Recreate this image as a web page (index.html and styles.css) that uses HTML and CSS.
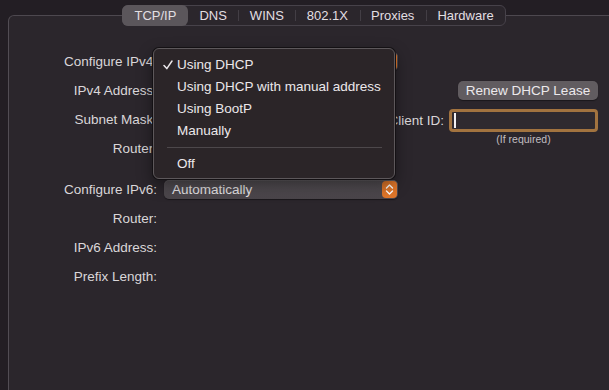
FILE: index.html
```html
<!DOCTYPE html>
<html>
<head>
<meta charset="utf-8">
<link rel="stylesheet" href="styles.css">
</head>
<body>
<div class="box">
  <div class="tabs">
    <div class="tab selected">TCP/IP</div>
    <div class="tab">DNS</div>
    <div class="tab sep">WINS</div>
    <div class="tab sep">802.1X</div>
    <div class="tab sep">Proxies</div>
    <div class="tab sep">Hardware</div>
  </div>

  <div class="section ipv4">
    <div class="lbl">Configure IPv4:</div>
    <div class="popup-wrap">
      <div class="popup">
        <span class="popup-text under">Using DHCP</span>
        <span class="stepper"><svg width="9" height="13" viewBox="0 0 9 13"><path d="M1.5 5 L4.5 2 L7.5 5 M1.5 8 L4.5 11 L7.5 8" fill="none" stroke="#fff" stroke-width="1.4" stroke-linecap="round" stroke-linejoin="round"/></svg></span>
      </div>
      <div class="menu">
        <div class="item checked"><svg class="check" width="10" height="10" viewBox="0 0 10 10"><path d="M1 5.5 L3.8 8.6 L9 1" fill="none" stroke="#ebe7ea" stroke-width="1.5" stroke-linecap="round" stroke-linejoin="round"/></svg>Using DHCP</div>
        <div class="item">Using DHCP with manual address</div>
        <div class="item">Using BootP</div>
        <div class="item">Manually</div>
        <div class="menu-sep"></div>
        <div class="item">Off</div>
      </div>
    </div>
    <div></div>

    <div class="lbl">IPv4 Address:</div>
    <div></div>
    <div class="right"><button class="renew">Renew DHCP Lease</button></div>

    <div class="lbl">Subnet Mask:</div>
    <div class="client">
      <span class="client-lbl">Client ID:</span>
      <div class="field-group">
        <div class="field"><span class="caret"></span></div>
        <div class="hint">(If required)</div>
      </div>
    </div>

    <div class="lbl">Router:</div>
    <div></div>
    <div></div>
  </div>

  <div class="section ipv6">
    <div class="lbl">Configure IPv6:</div>
    <div class="popup">
      <span class="popup-text">Automatically</span>
      <span class="stepper"><svg width="9" height="13" viewBox="0 0 9 13"><path d="M1.5 5 L4.5 2 L7.5 5 M1.5 8 L4.5 11 L7.5 8" fill="none" stroke="#fff" stroke-width="1.4" stroke-linecap="round" stroke-linejoin="round"/></svg></span>
    </div>
    <div></div>

    <div class="lbl">Router:</div>
    <div></div>
    <div></div>

    <div class="lbl">IPv6 Address:</div>
    <div></div>
    <div></div>

    <div class="lbl">Prefix Length:</div>
    <div></div>
    <div></div>
  </div>
</div>
</body>
</html>
```

FILE: styles.css
```css
html, body {
  margin: 0;
  padding: 0;
  height: 100%;
  overflow: hidden;
}
body {
  background: #231e24;
  font-family: "Liberation Sans", Arial, sans-serif;
  font-size: 13.5px;
  color: #dcd8db;
}
.box {
  margin: 15px 0 0 8px;
  height: 375px;
  box-sizing: border-box;
  border-left: 1px solid #524d54;
  border-top: 1px solid #4d484f;
  border-top-left-radius: 6px;
  background: #2b262c;
}
.tabs {
  display: flex;
  width: fit-content;
  margin: -11px 0 0 113px;
  height: 19px;
  border: 1px solid #47424a;
  border-radius: 6px;
  background: #2b262c;
  align-items: stretch;
  font-size: 13px;
}
.tab {
  position: relative;
  padding: 0 11.5px;
  line-height: 19px;
  color: #e2dfe2;
}
.tab.selected {
  background: #5b565b;
  border-radius: 6px;
  margin: -1px 0 -1px -1px;
  line-height: 21px;
  padding: 0 11.5px 0 12.5px;
}
.tab.sep::before {
  content: "";
  position: absolute;
  left: 0;
  top: 4px;
  width: 1px;
  height: 11px;
  background: #433e45;
}
.section {
  display: grid;
  grid-template-columns: 148px 234px 1fr;
  grid-auto-rows: 29px;
  column-gap: 7px;
  align-items: center;
}
.ipv4 {
  margin-top: 21px;
}
.ipv6 {
  margin-top: 12px;
}
.lbl {
  text-align: right;
  color: #dad6d9;
}
.popup-wrap {
  position: relative;
  height: 19px;
}
.popup {
  height: 19px;
  box-sizing: border-box;
  border-radius: 5px;
  background: linear-gradient(#555055, #4a454a);
  box-shadow: inset 0 1px 0 rgba(255,255,255,0.08), 0 0.5px 1px rgba(0,0,0,0.4);
  display: flex;
  align-items: center;
  justify-content: space-between;
  padding: 0 1px 0 8px;
  color: #e8e5e8;
}
.popup-text.under {
  visibility: hidden;
}
.stepper {
  width: 15px;
  height: 17px;
  border-radius: 4px;
  background: #e1772a;
  display: flex;
  align-items: center;
  justify-content: center;
}
.menu {
  position: absolute;
  left: -11px;
  top: -4px;
  width: 242px;
  height: 131px;
  box-sizing: border-box;
  padding: 5px 0;
  background: #2b2528;
  border: 1px solid #5d585b;
  border-radius: 6px;
  box-shadow: 0 0 0 1px #141114, 0 6px 16px rgba(0,0,0,0.45);
  z-index: 5;
  color: #ece8eb;
}
.item {
  position: relative;
  height: 22px;
  line-height: 22px;
  padding-left: 23px;
  white-space: nowrap;
}
.check {
  position: absolute;
  left: 9px;
  top: 6px;
}
.menu-sep {
  height: 1px;
  margin: 5px 12px 5px 13px;
  background: #4d484b;
}
.right {
  display: flex;
  justify-content: flex-end;
  padding-right: 11px;
}
.renew {
  font: inherit;
  width: 140px;
  height: 19px;
  padding: 0;
  border: none;
  border-radius: 5px;
  background: #615c60;
  color: #ece9ec;
  box-shadow: 0 0.5px 1px rgba(0,0,0,0.4);
}
.client {
  grid-column: 2 / 4;
  display: flex;
  justify-content: flex-end;
  align-items: flex-start;
  align-self: start;
  padding: 4px 11px 0 0;
}
.client-lbl {
  line-height: 23px;
  margin-right: 5px;
  color: #dad6d9;
}
.field-group {
  display: flex;
  flex-direction: column;
  align-items: center;
  width: 149px;
}
.field {
  width: 149px;
  height: 23px;
  box-sizing: border-box;
  border: 3px solid #a2733f;
  border-radius: 4px;
  background: #2f2a2f;
  position: relative;
}
.caret {
  position: absolute;
  left: 2px;
  top: 1px;
  width: 1.5px;
  height: 15px;
  background: #f2f0f2;
}
.hint {
  font-size: 10.5px;
  line-height: 13px;
  margin-top: 1px;
  color: #c2bec1;
}
```
